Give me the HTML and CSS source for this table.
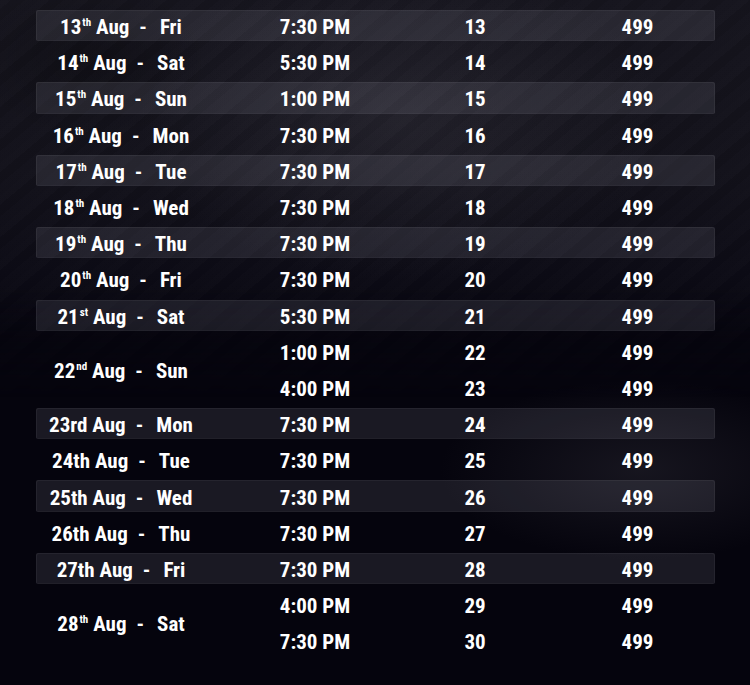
FILE: index.html
```html
<!DOCTYPE html>
<html lang="en">
<head>
<meta charset="utf-8">
<title>Show Schedule</title>
<link rel="stylesheet" href="styles.css">
</head>
<body>
<div class="bg"></div>
<div class="bg-patch"></div>
<table class="schedule">
  <colgroup>
    <col class="c-date"><col class="c-time"><col class="c-num"><col class="c-price">
  </colgroup>
  <tbody>
    <tr class="alt"><td class="date">13<sup>th</sup> Aug<span class="dash">-</span>Fri</td><td>7:30 PM</td><td>13</td><td class="price">499</td></tr>
    <tr><td class="date">14<sup>th</sup> Aug<span class="dash">-</span>Sat</td><td>5:30 PM</td><td>14</td><td class="price">499</td></tr>
    <tr class="alt"><td class="date">15<sup>th</sup> Aug<span class="dash">-</span>Sun</td><td>1:00 PM</td><td>15</td><td class="price">499</td></tr>
    <tr><td class="date">16<sup>th</sup> Aug<span class="dash">-</span>Mon</td><td>7:30 PM</td><td>16</td><td class="price">499</td></tr>
    <tr class="alt"><td class="date">17<sup>th</sup> Aug<span class="dash">-</span>Tue</td><td>7:30 PM</td><td>17</td><td class="price">499</td></tr>
    <tr><td class="date">18<sup>th</sup> Aug<span class="dash">-</span>Wed</td><td>7:30 PM</td><td>18</td><td class="price">499</td></tr>
    <tr class="alt"><td class="date">19<sup>th</sup> Aug<span class="dash">-</span>Thu</td><td>7:30 PM</td><td>19</td><td class="price">499</td></tr>
    <tr><td class="date">20<sup>th</sup> Aug<span class="dash">-</span>Fri</td><td>7:30 PM</td><td>20</td><td class="price">499</td></tr>
    <tr class="alt"><td class="date">21<sup>st</sup> Aug<span class="dash">-</span>Sat</td><td>5:30 PM</td><td>21</td><td class="price">499</td></tr>
    <tr><td class="date" rowspan="2">22<sup>nd</sup> Aug<span class="dash">-</span>Sun</td><td>1:00 PM</td><td>22</td><td class="price">499</td></tr>
    <tr><td>4:00 PM</td><td>23</td><td class="price">499</td></tr>
    <tr class="alt"><td class="date">23rd Aug<span class="dash">-</span>Mon</td><td>7:30 PM</td><td>24</td><td class="price">499</td></tr>
    <tr><td class="date">24th Aug<span class="dash">-</span>Tue</td><td>7:30 PM</td><td>25</td><td class="price">499</td></tr>
    <tr class="alt"><td class="date">25th Aug<span class="dash">-</span>Wed</td><td>7:30 PM</td><td>26</td><td class="price">499</td></tr>
    <tr><td class="date">26th Aug<span class="dash">-</span>Thu</td><td>7:30 PM</td><td>27</td><td class="price">499</td></tr>
    <tr class="alt"><td class="date">27th Aug<span class="dash">-</span>Fri</td><td>7:30 PM</td><td>28</td><td class="price">499</td></tr>
    <tr><td class="date" rowspan="2">28<sup>th</sup> Aug<span class="dash">-</span>Sat</td><td>4:00 PM</td><td>29</td><td class="price">499</td></tr>
    <tr><td>7:30 PM</td><td>30</td><td class="price">499</td></tr>
  </tbody>
</table>
</body>
</html>
```

FILE: styles.css
```css
html, body {
  margin: 0;
  padding: 0;
}
body {
  width: 750px;
  height: 685px;
  overflow: hidden;
  background: #05040d;
  font-family: Roboto, "Liberation Sans", sans-serif;
  color: #ffffff;
  position: relative;
}
.bg {
  position: absolute;
  inset: 0;
  z-index: 0;
  background:
    repeating-linear-gradient(140deg, rgba(255,255,255,0.012) 0 7px, rgba(0,0,0,0.025) 7px 16px, rgba(255,255,255,0.008) 16px 25px),
    radial-gradient(ellipse 260px 160px at 400px 120px, rgba(70,68,78,0.3), rgba(0,0,0,0) 100%),
    radial-gradient(ellipse 120px 80px at 90px 60px, rgba(0,0,0,0.25), rgba(0,0,0,0) 100%),
    linear-gradient(to bottom, #15141d 0%, #12111a 25%, #0c0b15 40%, #06050e 50%, #05040d 100%);
  -webkit-mask-image: linear-gradient(to bottom, #000 0%, #000 42%, rgba(0,0,0,0) 58%);
  mask-image: linear-gradient(to bottom, #000 0%, #000 42%, rgba(0,0,0,0) 58%);
}
.bg-patch {
  position: absolute;
  inset: 0;
  z-index: 0;
  background:
    radial-gradient(ellipse 200px 90px at 640px 470px, rgba(55,53,64,0.35), rgba(0,0,0,0) 100%);
}
.schedule {
  position: relative;
  z-index: 1;
  margin: 5px 0 0 36px;
  width: 679px;
  border-collapse: separate;
  border-spacing: 0 5px;
  table-layout: fixed;
  font-size: 21px;
  font-weight: 700;
  font-stretch: 85%;
}
.c-date { width: 170px; }
.c-time { width: 218px; }
.c-num { width: 102px; }
.c-price { width: 189px; }
.schedule td {
  height: 28.2px;
  padding: 3px 0 0 0;
  text-align: center;
  vertical-align: middle;
  line-height: 28px;
  white-space: nowrap;
}
.schedule td.price {
  padding-left: 34px;
}
.schedule tr.alt td {
  background: rgba(200, 200, 215, 0.11);
  box-shadow: inset 0 1px 0 rgba(255,255,255,0.05), inset 0 -1px 0 rgba(255,255,255,0.03);
}
.schedule tr.alt td:first-child {
  box-shadow: inset 1px 1px 0 rgba(255,255,255,0.05), inset 0 -1px 0 rgba(255,255,255,0.03);
  border-radius: 2px 0 0 2px;
}
.schedule tr.alt td:last-child {
  box-shadow: inset -1px 1px 0 rgba(255,255,255,0.05), inset 0 -1px 0 rgba(255,255,255,0.03);
  border-radius: 0 2px 2px 0;
}
.date .dash {
  margin: 0 13px 0 10px;
}
.date sup {
  font-size: 11px;
  line-height: 0;
  vertical-align: 8px;
  margin-left: 1px;
}
```
